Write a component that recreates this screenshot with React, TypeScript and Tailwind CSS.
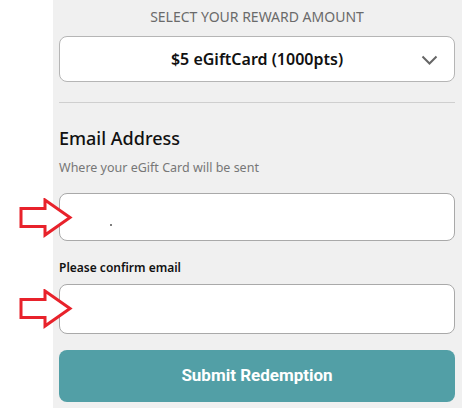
import React from "react";

function RedArrow({ className }: { className: string }) {
  return (
    <svg
      className={className}
      width="54"
      height="40"
      viewBox="0 0 54 40"
      fill="none"
    >
      <path
        d="M2 10.5 H26 V2 L51 19.5 L26 37 V28.5 H2 Z"
        stroke="#e8222b"
        strokeWidth="3"
        strokeLinejoin="miter"
        fill="white"
      />
    </svg>
  );
}

export default function App() {
  return (
    <div
      className="relative flex w-[462px] h-[410px] bg-white"
      style={{ fontFamily: '"Noto Sans", "Open Sans", sans-serif' }}
    >
      <div className="w-[53px] shrink-0" />
      <div className="flex-1 h-[408px] bg-[#f0f0f0] pl-[6px] pr-[7px] flex flex-col">
        <p className="mt-[6px] text-center text-[14px] leading-[22px] text-[#6a6a6a]">
          SELECT YOUR REWARD AMOUNT
        </p>

        <div className="mt-[8px] h-[46px] rounded-[8px] border border-[#b5b5b5] bg-white flex items-center relative">
          <span className="flex-1 text-center text-[16px] font-semibold text-[#111]">
            $5 eGiftCard (1000pts)
          </span>
          <svg
            className="absolute right-[16px] top-[18px]"
            width="17"
            height="10"
            viewBox="0 0 17 10"
            fill="none"
          >
            <path d="M1.5 1.5 L8.5 8.5 L15.5 1.5" stroke="#666" strokeWidth="2" />
          </svg>
        </div>

        <div className="mt-[20px] h-px bg-[#cfcfcf]" />

        <h2 className="mt-[23px] text-[18px] leading-[24px] font-medium text-[#111]">
          Email Address
        </h2>
        <p className="mt-[8px] text-[12.5px] leading-[20px] text-[#777]">
          Where your eGift Card will be sent
        </p>

        <div className="mt-[15px] h-[48px] rounded-[8px] border border-[#a9a9a9] bg-white relative">
          <span className="absolute left-[50px] top-[30px] w-[2px] h-[2px] rounded-full bg-[#555]" />
        </div>

        <p className="mt-[18px] text-[12px] leading-[18px] font-semibold text-[#111]">
          Please confirm email
        </p>

        <div className="mt-[7px] h-[50px] rounded-[8px] border border-[#a9a9a9] bg-white" />

        <button
          className="mt-[16px] h-[52px] rounded-[8px] bg-[#529fa6] text-white text-[17px] font-bold"
          style={{ fontFamily: "Roboto, sans-serif" }}
        >
          Submit Redemption
        </button>
      </div>

      <RedArrow className="absolute left-[19px] top-[198px]" />
      <RedArrow className="absolute left-[19px] top-[289px]" />
    </div>
  );
}
